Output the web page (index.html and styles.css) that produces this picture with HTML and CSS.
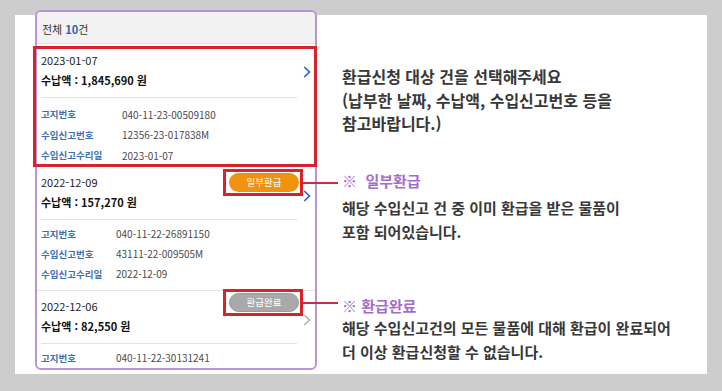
FILE: index.html
```html
<!DOCTYPE html>
<html lang="ko">
<head>
<meta charset="utf-8">
<title>환급신청</title>
<link rel="stylesheet" href="styles.css">
</head>
<body>
<div class="panel">
  <div class="phone">
    <div class="phone-head">전체 <b>10</b>건</div>

    <div class="card card-sel card-wide">
      <div class="card-top">
        <div class="date">2023-01-07</div>
        <div class="amount">수납액 : 1,845,690 원</div>
        <svg class="chev" width="8" height="12" viewBox="0 0 8 12"><polyline points="1.2,1 6.5,6 1.2,11" fill="none" stroke="#2a5bd7" stroke-width="1.6"/></svg>
      </div>
      <div class="sep"></div>
      <div class="rows">
        <span class="lbl">고지번호</span><span class="val">040-11-23-00509180</span>
        <span class="lbl">수입신고번호</span><span class="val">12356-23-017838M</span>
        <span class="lbl">수입신고수리일</span><span class="val">2023-01-07</span>
      </div>
    </div>

    <div class="card card-mid">
      <div class="card-top">
        <div class="date">2022-12-09</div>
        <div class="amount">수납액 : 157,270 원</div>
        <div class="badge-box"><span class="badge badge-part">일부환급</span></div>
        <svg class="chev" width="8" height="12" viewBox="0 0 8 12"><polyline points="1.2,1 6.5,6 1.2,11" fill="none" stroke="#2a5bd7" stroke-width="1.6"/></svg>
      </div>
      <div class="sep"></div>
      <div class="rows">
        <span class="lbl">고지번호</span><span class="val">040-11-22-26891150</span>
        <span class="lbl">수입신고번호</span><span class="val">43111-22-009505M</span>
        <span class="lbl">수입신고수리일</span><span class="val">2022-12-09</span>
      </div>
    </div>

    <div class="card card-last">
      <div class="card-top">
        <div class="date">2022-12-06</div>
        <div class="amount">수납액 : 82,550 원</div>
        <div class="badge-box badge-box-up"><span class="badge badge-done">환급완료</span></div>
        <svg class="chev" width="8" height="12" viewBox="0 0 8 12"><polyline points="1.2,1 6.5,6 1.2,11" fill="none" stroke="#aaaaaa" stroke-width="1.4"/></svg>
      </div>
      <div class="sep"></div>
      <div class="rows">
        <span class="lbl">고지번호</span><span class="val">040-11-22-30131241</span>
      </div>
    </div>
  </div>

  <div class="notes">
    <p class="lead">환급신청 대상 건을 선택해주세요<br>(납부한 날짜, 수납액, 수입신고번호 등을<br>참고바랍니다.)</p>
    <div class="note note-part">
      <div class="note-title">※&nbsp; 일부환급</div>
      <p>해당 수입신고 건 중 이미 환급을 받은 물품이<br>포함 되어있습니다.</p>
    </div>
    <div class="note note-done">
      <div class="note-title">※ 환급완료</div>
      <p>해당 수입신고건의 모든 물품에 대해 환급이 완료되어<br>더 이상 환급신청할 수 없습니다.</p>
    </div>
  </div>
</div>
</body>
</html>
```

FILE: styles.css
```css
* { box-sizing: border-box; }
html, body { margin: 0; }
body {
  width: 722px;
  height: 391px;
  background: #cdcdcd;
  padding: 15px;
  font-family: "Noto Sans CJK KR", "Noto Sans", sans-serif;
  overflow: hidden;
}
.panel {
  width: 692px;
  height: 359px;
  background: #ffffff;
  display: flex;
  align-items: flex-start;
  padding-left: 20px;
}
.phone {
  width: 282px;
  height: 360px;
  margin-top: -5px;
  border: 2px solid #b894d6;
  border-radius: 6px;
  background: #fff;
  position: relative;
  flex: none;
}
.phone-head {
  height: 32px;
  border-bottom: 1px solid #dedede;
  background: #f2f2f2;
  border-radius: 4px 4px 0 0;
  display: flex;
  align-items: center;
  padding-left: 5px;
  padding-top: 2px;
  font-size: 11px;
  color: #333;
}
.phone-head b { color: #2d63b5; font-weight: 700; margin: 0 0 0 3px; }

.card {
  position: relative;
  padding: 5px 4px 4px 4px;
  border-bottom: 1px solid #e4e4e4;
}
.card-sel { padding: 6px 4px 0 4px; }
.card-sel::after {
  content: "";
  position: absolute;
  top: 2px; left: -4px; right: -2px; bottom: -1px;
  border: 3px solid #d9222c;
  pointer-events: none;
}
.card-mid { padding-bottom: 6px; }
.card-last { border-bottom: 0; }
.card-top { position: relative; }
.date {
  height: 20px;
  line-height: 20px;
  font-size: 11px;
  color: #222;
}
.amount {
  height: 20px;
  line-height: 20px;
  font-size: 11px;
  font-weight: 700;
  color: #111;
}
.chev {
  position: absolute;
  right: 0;
  top: 18px;
}
.card-sel .chev { top: 16px; }
.sep {
  height: 1px;
  background: #e3e3e3;
  margin: 7px 14px 4px 0;
}
.card-sel .sep { margin-bottom: 6px; }
.rows {
  display: grid;
  grid-template-columns: 75px 1fr;
  grid-auto-rows: 20px;
  align-items: center;
}
.card-wide .rows { grid-template-columns: 81px 1fr; grid-auto-rows: 20.5px; }
.lbl { font-size: 9.5px; color: #3c70b5; font-weight: 700; }
.val { font-size: 10px; color: #4a4a4a; }

.badge-box {
  position: absolute;
  top: -3px;
  right: 8px;
  border: 3px solid #d9222c;
  padding: 1px 1px 1px 3px;
  display: flex;
}
.badge-box-up { top: -7px; }
.badge-box::after {
  content: "";
  position: absolute;
  left: calc(100% + 3px);
  top: 50%;
  width: 35px;
  height: 1.5px;
  background: #c92a49;
}
.badge {
  width: 70px;
  height: 19px;
  border-radius: 10px;
  display: flex;
  align-items: center;
  justify-content: center;
  font-size: 9.5px;
  color: #fff;
}
.badge-part { background: #ef920e; }
.badge-done { background: #a9a9a9; border: 1px solid #9a9a9a; }

.notes {
  margin-left: 25px;
  color: #383838;
}
.lead {
  margin: 50px 0 0 0;
  font-size: 16px;
  line-height: 23.5px;
  font-weight: 700;
}
.note-title {
  font-size: 15px;
  line-height: 24px;
  color: #a46ccd;
  font-weight: 700;
}
.note p {
  margin: 0;
  font-size: 15px;
  line-height: 24px;
  font-weight: 700;
}
.note-part { margin-top: 33px; }
.note-part p { margin-top: 3px; }
.note-done { margin-top: 50px; }
.note-done p { margin-top: -2px; }
```
